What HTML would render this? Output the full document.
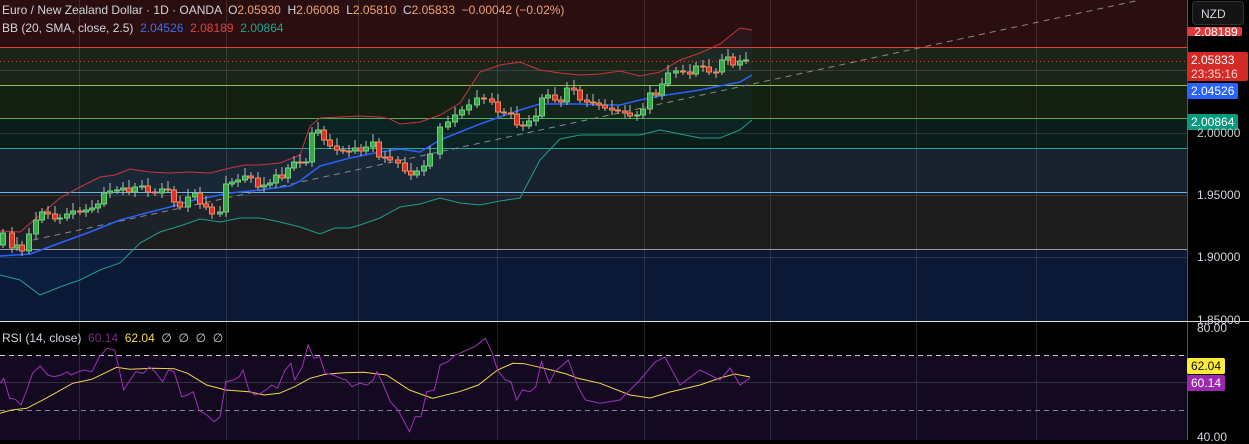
<!DOCTYPE html>
<html><head><meta charset="utf-8"><style>
html,body{margin:0;padding:0;background:#000;width:1249px;height:440px;overflow:hidden;font-family:"Liberation Sans",sans-serif}
#c{position:absolute;left:0;top:0}
.lg{position:absolute;font-size:12px;color:#d1d4dc;white-space:pre;line-height:14px}
.o{color:#f0a070}
.ax{position:absolute;left:1197px;font-size:12px;color:#d1d4dc}
.bx{position:absolute;left:1187px;font-size:12px;padding:0 4px;border-radius:2px;line-height:16px}
</style></head><body>
<svg id="c" width="1249" height="440" xmlns="http://www.w3.org/2000/svg">
<rect x="0" y="0" width="1187" height="47" fill="#2b0f10"/>
<rect x="0" y="47" width="1187" height="38" fill="#1c2419"/>
<rect x="0" y="85" width="1187" height="33" fill="#131f11"/>
<rect x="0" y="118" width="1187" height="30" fill="#0a1d19"/>
<rect x="0" y="148" width="1187" height="44" fill="#18222e"/>
<rect x="0" y="192" width="1187" height="57" fill="#1c1c1d"/>
<rect x="0" y="249" width="1187" height="72" fill="#0b1836"/>
<rect x="0" y="322" width="1187" height="33" fill="#000"/>
<rect x="0" y="355" width="1187" height="85" fill="#130a22"/>
<g id="grid" stroke="#ffffff" stroke-opacity="0.12" stroke-width="1"></g>
<polygon id="bbfill" fill="#2196f3" fill-opacity="0.05"/>
<line x1="0" y1="47.5" x2="1187" y2="47.5" stroke="#e0403f"/>
<line x1="0" y1="61.5" x2="1187" y2="61.5" stroke="#e0403f" stroke-dasharray="1 3"/>
<line x1="0" y1="85.5" x2="1187" y2="85.5" stroke="#8bc34a"/>
<line x1="0" y1="118.5" x2="1187" y2="118.5" stroke="#4caf50"/>
<line x1="0" y1="148.5" x2="1187" y2="148.5" stroke="#26a69a"/>
<line x1="0" y1="192.5" x2="1187" y2="192.5" stroke="#64b5f6"/>
<line x1="0" y1="249.5" x2="1187" y2="249.5" stroke="#9a9a9a"/>
<line x1="33" y1="240" x2="1140" y2="0" stroke="#888" stroke-dasharray="6 5"/>
<polyline id="up" fill="none" stroke="#c9363b" stroke-width="1"/>
<polyline id="mid" fill="none" stroke="#2962ff" stroke-width="1.5"/>
<polyline id="lo" fill="none" stroke="#1f9e89" stroke-width="1"/>
<g id="cd"></g>
<rect x="1187" y="0" width="62" height="322" fill="#000"/>
<rect x="1187" y="322" width="62" height="118" fill="#000"/>
<line x1="1187.5" y1="0" x2="1187.5" y2="440" stroke="#555"/>
<line x1="0" y1="321.5" x2="1249" y2="321.5" stroke="#ddd"/>
<line x1="0" y1="355.5" x2="1187" y2="355.5" stroke="#ccc" stroke-dasharray="5 4"/>
<line x1="0" y1="382.5" x2="1187" y2="382.5" stroke="#fff" stroke-opacity="0.15"/>
<line x1="0" y1="410.5" x2="1187" y2="410.5" stroke="#888" stroke-dasharray="5 4"/>
<polyline id="rma" fill="none" stroke="#f2d64b" stroke-width="1"/>
<polyline id="rsi" fill="none" stroke="#a030b8" stroke-width="1"/>
</svg>
<div class="lg" style="left:2px;top:3px">Euro / New Zealand Dollar · 1D · OANDA  O<span class="o">2.05930</span>  H<span class="o">2.06008</span>  L<span class="o">2.05810</span>  C<span class="o">2.05833  −0.00042 (−0.02%)</span></div>
<div class="lg" style="left:2px;top:21px">BB (20, SMA, close, 2.5)  <span style="color:#3f6cf0">2.04526</span>  <span style="color:#e0403f">2.08189</span>  <span style="color:#1fa58e">2.00864</span></div>
<div class="lg" style="left:2px;top:331px">RSI (14, close)  <span style="color:#7a2a8a">60.14</span>  <span style="color:#f2d64b">62.04</span>  ∅  ∅  ∅  ∅</div>
<div style="position:absolute;left:1192px;top:1px;width:52px;height:24px;border:1px solid #333;border-radius:4px;background:#141414;color:#d1d4dc;font-size:12px;line-height:24px;padding-left:8px;box-sizing:border-box">NZD</div>
<div class="bx" style="top:27px;background:#e33b3b;color:#fff;height:9px;overflow:hidden;line-height:10px">&nbsp;2.08189</div>
<div class="bx" style="top:52px;background:#d42a26;color:#fff;height:28px;width:53px;line-height:14px;padding-top:1px">2.05833<br><span style="color:#ffd0d0">23:35:16</span></div>
<div class="bx" style="top:83px;background:#2962ff;color:#fff">2.04526</div>
<div class="bx" style="top:114px;background:#089981;color:#fff">2.00864</div>
<div class="ax" style="top:126px;color:#ccc">2.00000</div>
<div class="ax" style="top:188px">1.95000</div>
<div class="ax" style="top:250px">1.90000</div>
<div class="ax" style="top:313px">1.85000</div>
<div class="ax" style="top:321px">80.00</div>
<div class="bx" style="top:358px;background:#ffeb3b;color:#111">62.04</div>
<div class="bx" style="top:375px;background:#9c27b0;color:#fff">60.14</div>
<div class="ax" style="top:430px">40.00</div>
<script>
var NS="http://www.w3.org/2000/svg";
function el(p,t,a){var e=document.createElementNS(NS,t);for(var k in a)e.setAttribute(k,a[k]);p.appendChild(e);return e;}
var g=document.getElementById('grid');
[79,226,358,497,644,770,916,1036].forEach(function(x){el(g,'line',{x1:x+.5,y1:0,x2:x+.5,y2:440});});
[70,133,195,257].forEach(function(y){el(g,'line',{x1:0,y1:y+.5,x2:1187,y2:y+.5});});
function pts(a){return a.map(function(p){return p[0]+','+p[1]}).join(' ');}
var up=[[0,231],[20,232],[40,215],[60,198],[80,187],[100,177],[115,175],[130,169],[150,172],[170,173],[190,172],[210,173],[230,168],[245,165],[260,165],[280,163],[300,155],[310,126],[320,118],[340,117],[360,116],[380,117],[390,119],[400,124],[420,122],[440,115],[460,103],[480,72],[500,65],[520,62],[540,70],[560,73],[580,75],[600,74],[620,71],[640,76],[660,72],[680,60],[700,53],[720,44],[740,28],[752,30]];
var mid=[[0,256],[30,254],[60,243],[90,232],[120,220],[150,212],[170,207],[190,201],[200,199],[230,193],[260,190],[290,186],[300,181],[320,166],[350,158],[380,152],[400,149],[420,152],[440,140],[460,132],[480,124],[500,117],[520,110],[540,104],[560,104],[580,104],[600,105],[620,105],[640,100],[660,96],[680,93],[700,90],[720,86],[740,82],[752,75]];
var lo=[[0,275],[20,280],[40,295],[60,287],[80,280],[100,270],[120,263],[140,243],[160,232],[180,226],[200,219],[220,222],[240,218],[260,218],[280,222],[300,227],[320,234],[335,228],[350,228],[360,225],[380,218],[400,207],[420,204],[440,198],[460,203],[480,205],[500,201],[520,198],[540,160],[560,139],[580,135],[600,135],[620,135],[640,135],[660,130],[680,134],[700,138],[720,138],[740,130],[752,120]];
document.getElementById('up').setAttribute('points',pts(up));
document.getElementById('mid').setAttribute('points',pts(mid));
document.getElementById('lo').setAttribute('points',pts(lo));
document.getElementById('bbfill').setAttribute('points',pts(up.concat(lo.slice().reverse())));
var cl=[[3,233],[12,248],[17,245],[22,251],[29,234],[36,220],[42,212],[48,214],[55,219],[60,218],[67,214],[73,211],[80,212],[86,210],[92,208],[98,204],[104,193],[110,191],[117,190],[123,188],[129,192],[135,187],[142,186],[148,192],[155,193],[162,189],[168,190],[174,202],[180,207],[188,197],[195,193],[200,204],[206,207],[212,214],[220,212],[226,184],[232,182],[238,180],[245,176],[251,178],[258,187],[264,185],[270,183],[276,175],[282,178],[288,168],[294,162],[300,163],[306,162],[312,133],[318,130],[324,140],[330,146],[337,150],[343,151],[349,151],[355,148],[361,151],[366,147],[373,142],[379,157],[385,157],[390,160],[398,163],[405,171],[411,175],[417,171],[424,166],[430,154],[440,127],[448,122],[455,115],[462,110],[469,105],[477,98],[484,99],[492,102],[498,112],[504,113],[511,114],[517,125],[523,126],[529,121],[536,116],[542,98],[548,95],[555,100],[561,102],[567,88],[574,90],[580,100],[587,102],[593,103],[599,105],[605,108],[612,110],[618,111],[625,113],[630,116],[637,115],[643,109],[650,93],[656,95],[662,84],[668,73],[676,71],[683,72],[690,74],[696,66],[703,67],[709,72],[716,72],[722,60],[728,57],[733,65],[740,61],[746,60]];
var cd=document.getElementById('cd');var prev=245;
cl.forEach(function(c,i){var o=prev,cv=c[1];if(Math.abs(o-cv)<1){cv=o+1;}var bull=cv<o;var top=Math.min(o,cv),bot=Math.max(o,cv);
var col=bull?'#3aa84a':'#d9342b',br=bull?'#6fd07a':'#f08a5d';
el(cd,'line',{x1:c[0],y1:top-4-(i%3)*2,x2:c[0],y2:bot+3+(i%2)*2,stroke:'#bbb','stroke-width':1});
el(cd,'rect',{x:c[0]-2.5,y:top,width:5,height:Math.max(1,bot-top),fill:col,stroke:br,'stroke-width':1});prev=c[1];});
var rp=[[0,220],[10,205],[25,265],[40,268],[55,285],[70,240],[85,190],[105,168],[125,195],[140,200],[160,195],[175,185],[185,195],[205,185],[220,180],[240,185],[260,140],[280,115],[300,120],[310,170],[323,240],[340,210],[355,185],[375,190],[390,170],[405,185],[425,215],[440,180],[455,185],[475,260],[490,255],[505,245],[520,300],[540,315],[560,335],[575,320],[590,215],[610,210],[625,200],[635,180],[650,240],[665,255],[680,250],[695,240],[710,225],[725,235],[745,180],[760,160],[770,210],[790,170],[805,105],[820,145],[835,140],[850,190],[870,195],[890,205],[905,210],[920,230],[940,220],[960,225],[975,210],[985,185],[1000,220],[1020,275],[1040,300],[1070,365],[1085,320],[1100,320],[1115,245],[1135,240],[1150,165],[1170,155],[1190,135],[1210,125],[1240,110],[1268,85],[1285,125],[1300,180],[1320,210],[1335,215],[1350,270],[1365,240],[1385,245],[1400,230],[1415,155],[1435,220],[1450,185],[1485,150],[1510,230],[1530,270],[1568,280]].map(function(p){return [(p[0]/2.613).toFixed(1),(310+p[1]/3).toFixed(1)]});
rp=rp.concat([[620,400],[640,380],[655,362],[665,357],[680,385],[700,370],[720,380],[730,368],[740,385],[750,378]]);
var ym=[[0,310],[30,300],[70,295],[120,265],[190,220],[240,208],[305,172],[340,178],[400,175],[455,176],[490,190],[540,225],[590,240],[650,245],[690,255],[730,250],[770,230],[810,205],[850,193],[900,188],[950,187],[1010,195],[1070,240],[1130,265],[1200,245],[1250,225],[1300,180],[1340,160],[1370,161],[1410,172],[1440,180],[1480,192],[1510,205],[1568,220]].map(function(p){return [(p[0]/2.613).toFixed(1),(310+p[1]/3).toFixed(1)]});
ym=ym.concat([[630,395],[650,398],[670,392],[700,385],[720,378],[735,374],[750,377]]);
document.getElementById('rsi').setAttribute('points',pts(rp));
document.getElementById('rma').setAttribute('points',pts(ym));
</script>
</body></html>
